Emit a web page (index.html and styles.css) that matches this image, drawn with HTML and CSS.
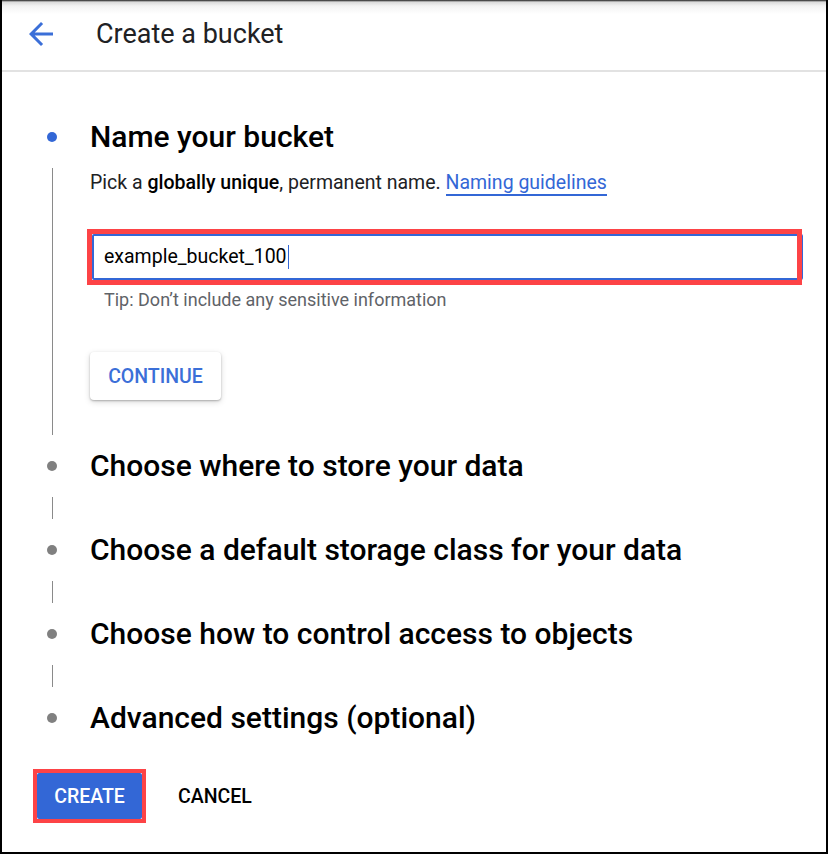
FILE: index.html
```html
<!DOCTYPE html>
<html lang="en">
<head>
<meta charset="utf-8">
<title>Create a bucket</title>
<link rel="stylesheet" href="styles.css">
</head>
<body>
<div class="frame">
  <header class="topbar">
    <svg class="back" width="36" height="36" viewBox="0 0 24 24" aria-hidden="true">
      <path d="M20 11H7.83l5.59-5.59L12 4l-8 8 8 8 1.41-1.41L7.83 13H20v-2z" fill="#3b6fd8"/>
    </svg>
    <h1 class="page-title">Create a bucket</h1>
  </header>

  <main class="steps">
    <section class="step">
      <div class="rail"><span class="dot dot-active"></span></div>
      <h2 class="step-title">Name your bucket</h2>
      <div class="rail"><span class="line"></span></div>
      <div class="step-body">
        <p class="desc">Pick a <b>globally unique</b>, permanent name. <a class="link" href="#">Naming guidelines</a></p>
        <div class="field">
          <div class="input"><span class="value">example_bucket_100</span></div>
          <span class="highlight"></span>
        </div>
        <p class="tip">Tip: Don’t include any sensitive information</p>
        <button class="btn-continue" type="button">CONTINUE</button>
      </div>
    </section>

    <section class="step">
      <div class="rail"><span class="dot"></span></div>
      <h2 class="step-title">Choose where to store your data</h2>
      <div class="rail"><span class="line line-short"></span></div>
      <div></div>
    </section>

    <section class="step">
      <div class="rail"><span class="dot"></span></div>
      <h2 class="step-title">Choose a default storage class for your data</h2>
      <div class="rail"><span class="line line-short"></span></div>
      <div></div>
    </section>

    <section class="step">
      <div class="rail"><span class="dot"></span></div>
      <h2 class="step-title">Choose how to control access to objects</h2>
      <div class="rail"><span class="line line-short"></span></div>
      <div></div>
    </section>

    <section class="step">
      <div class="rail"><span class="dot"></span></div>
      <h2 class="step-title">Advanced settings (optional)</h2>
    </section>
  </main>

  <footer class="actions">
    <div class="create-wrap">
      <button class="btn-create" type="button">CREATE</button>
      <span class="highlight highlight-create"></span>
    </div>
    <button class="btn-cancel" type="button">CANCEL</button>
  </footer>
</div>
</body>
</html>
```

FILE: styles.css
```css
* { box-sizing: border-box; }

html, body {
  margin: 0;
  padding: 0;
  background: #fff;
}

body {
  font-family: Roboto, "Liberation Sans", Arial, sans-serif;
  color: #202124;
}

.frame {
  width: 828px;
  height: 854px;
  border-left: 2px solid #000;
  border-right: 2px solid #000;
  border-bottom: 2px solid #000;
  display: flex;
  flex-direction: column;
  overflow: hidden;
}

.topbar {
  height: 72px;
  flex: none;
  display: flex;
  align-items: center;
  padding-left: 21px;
  border-bottom: 2px solid #e2e2e2;
  background: linear-gradient(to bottom, #1a1a1a 0px, #d9d9d9 2px, #f2f2f2 6px, #fff 14px);
  padding-bottom: 3px;
}

.back {
  display: block;
  flex: none;
}

.page-title {
  margin: 0 0 0 37px;
  font-size: 27px;
  font-weight: 400;
  line-height: 32px;
  color: #202124;
}

.steps {
  padding: 45px 0 0 28px;
}

.step {
  display: grid;
  grid-template-columns: 44px 1fr;
  column-gap: 16px;
}

.rail {
  display: flex;
  justify-content: center;
  align-items: center;
}

.dot {
  width: 10px;
  height: 10px;
  border-radius: 50%;
  background: #808080;
}

.dot-active {
  background: #3367d6;
}

.line {
  align-self: stretch;
  width: 1px;
  background: #8a8a8a;
  margin: 11px 0 11px;
}

.line-short {
  height: 22px;
  align-self: center;
  margin: 11px 0 11px;
}

.step-title {
  margin: 0;
  font-size: 30px;
  font-weight: 500;
  line-height: 40px;
  color: #000;
  white-space: nowrap;
}

.step-body {
  padding: 14px 0 46px;
}

.desc {
  margin: 0;
  font-size: 19.5px;
  line-height: 24px;
  color: #202124;
}

.desc b {
  font-weight: 500;
  color: #000;
}

.link {
  color: #3367d6;
  text-decoration: none;
  border-bottom: 2px solid #3367d6;
  padding-bottom: 0;
}

.field {
  position: relative;
  margin: 39px 0 0 2px;
  width: 711px;
}

.input {
  height: 46px;
  border: 2px solid #3367d6;
  border-radius: 2px;
  padding-left: 10px;
  display: flex;
  align-items: center;
  font-size: 19.5px;
  color: #000;
}

.value {
  border-right: 1px solid #3367d6;
  padding-right: 1px;
  line-height: 24px;
}

.highlight {
  position: absolute;
  top: -5px;
  left: -5px;
  width: 715px;
  height: 56px;
  border: 5px solid #fd4346;
  pointer-events: none;
}

.tip {
  margin: 10px 0 0 14px;
  font-size: 18px;
  line-height: 20px;
  color: #5f6368;
}

.btn-continue {
  margin-top: 42px;
  width: 131px;
  height: 48px;
  border: none;
  border-radius: 4px;
  background: #fff;
  box-shadow: 0 1px 2px rgba(0,0,0,0.25), 0 2px 6px rgba(0,0,0,0.15);
  color: #3b6fd8;
  font-family: inherit;
  font-size: 19.5px;
  font-weight: 500;
  padding: 0;
  display: block;
}

.actions {
  display: flex;
  align-items: center;
  padding: 35px 0 0 35px;
  gap: 20px;
}

.create-wrap {
  position: relative;
}

.btn-create {
  display: block;
  width: 105px;
  height: 46px;
  border: none;
  border-radius: 2px;
  background: #3367d6;
  color: #fff;
  font-family: inherit;
  font-size: 19.5px;
  font-weight: 500;
  padding: 0;
}

.highlight-create {
  top: -4px;
  left: -4px;
  width: 113px;
  height: 54px;
  border-width: 4px;
}

.btn-cancel {
  border: none;
  background: none;
  padding: 0 16px;
  height: 46px;
  font-family: inherit;
  font-size: 19.5px;
  font-weight: 500;
  color: #000;
}
```
